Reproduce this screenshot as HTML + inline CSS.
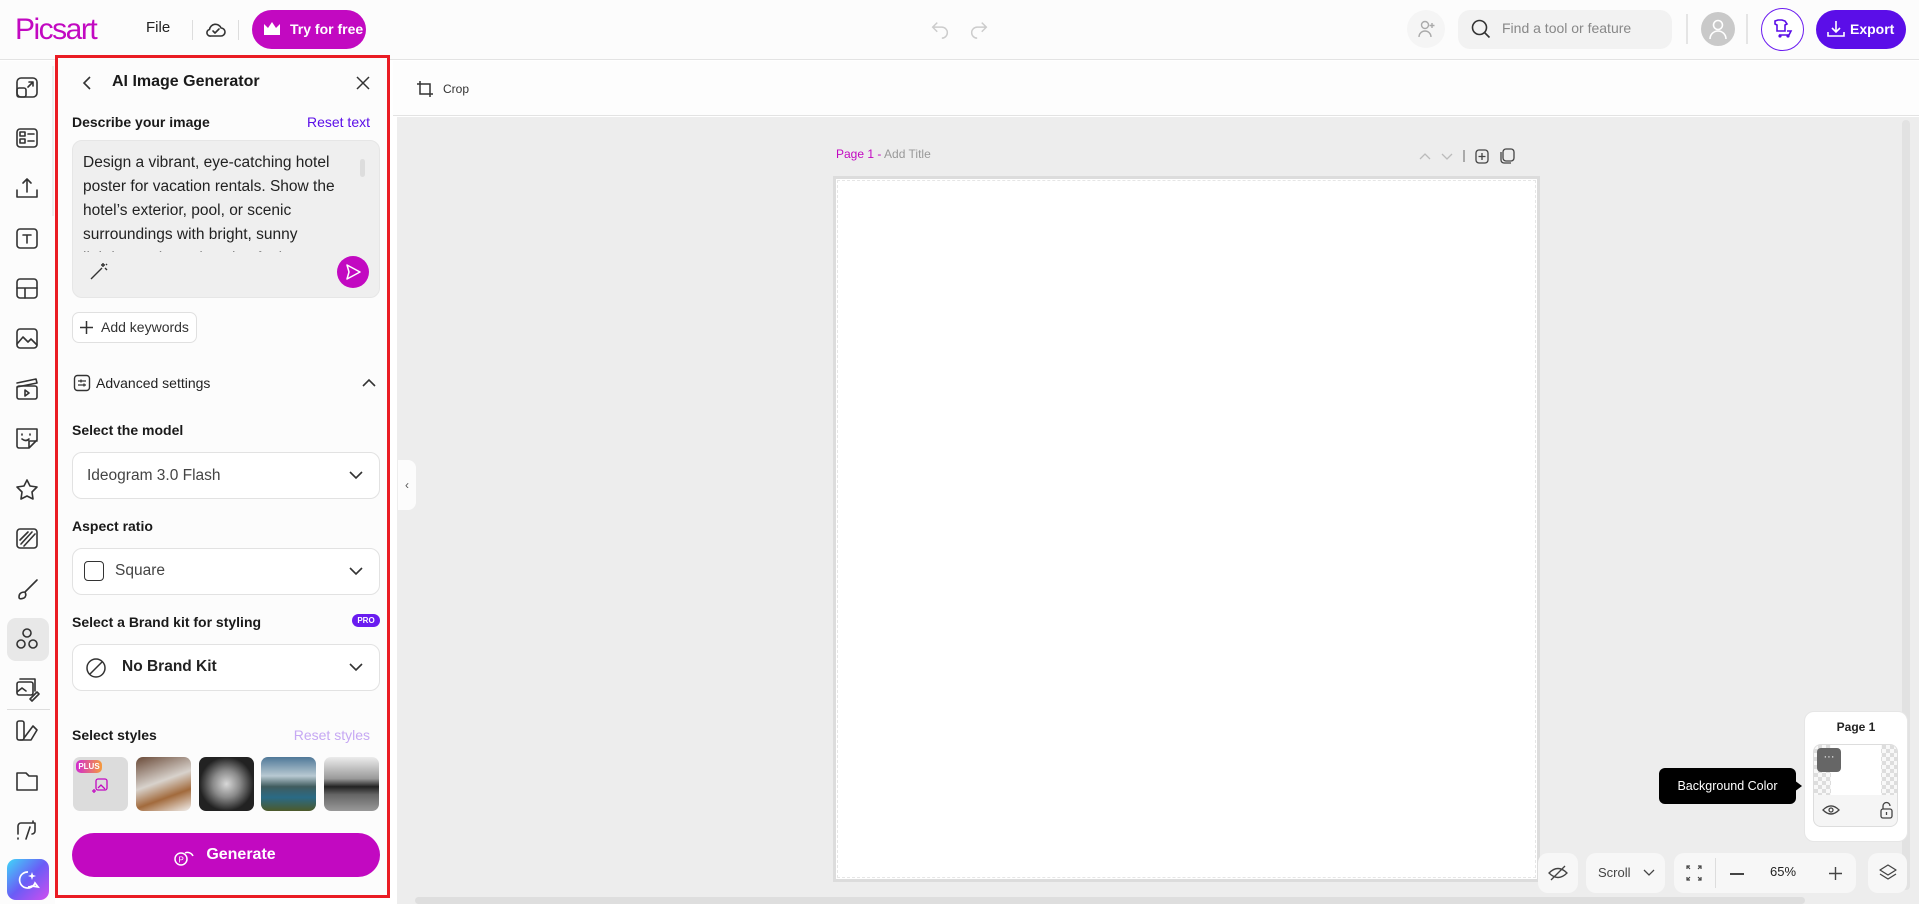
<!DOCTYPE html>
<html><head><meta charset="utf-8">
<style>
*{box-sizing:border-box;margin:0;padding:0}
body{width:1919px;height:904px;overflow:hidden;background:#fff;font-family:"Liberation Sans",sans-serif;color:#1a1a1a;position:relative}
.abs{position:absolute}
svg{display:block}
.ic{fill:none;stroke:#333;stroke-width:1.6;stroke-linecap:round;stroke-linejoin:round}
.dd{position:absolute;left:72px;width:308px;height:47px;border:1px solid #e2e2e2;border-radius:10px;background:#fff}
.lbl{position:absolute;left:72px;font-size:14px;font-weight:bold;color:#1a1a1a}
.ctl{position:absolute;background:#f7f7f7;border-radius:10px;top:853px;height:40px}
</style></head><body>

<!-- top bar -->
<div class="abs" style="left:0;top:0;width:1919px;height:60px;background:#fcfcfc;border-bottom:1px solid #e3e3e3"></div>
<div class="abs" style="left:15px;top:13px;font-size:30px;color:#c209c1;letter-spacing:-1.5px">Picsart</div>
<div class="abs" style="left:146px;top:19px;font-size:15px;color:#222">File</div>
<div class="abs" style="left:192px;top:20px;width:1px;height:20px;background:#ddd"></div>
<svg class="abs" style="left:204px;top:18px" width="24" height="24" viewBox="0 0 24 24"><path class="ic" d="M7 18h10a4 4 0 0 0 0-8 6 6 0 0 0-11.5 1.5A3.3 3.3 0 0 0 7 18z"/><path class="ic" d="M9 13l2 2 4-4"/></svg>
<div class="abs" style="left:238px;top:20px;width:1px;height:20px;background:#ddd"></div>
<div class="abs" style="left:252px;top:10px;width:114px;height:39px;border-radius:20px;background:#c209c1;color:#fff;font-size:14px;font-weight:bold;line-height:39px;padding-left:38px">Try for free</div>
<svg class="abs" style="left:263px;top:21px" width="18" height="16" viewBox="0 0 18 16"><path d="M1 3l4 4 4-6 4 6 4-4v11H1z" fill="#fff"/></svg>
<svg class="abs" style="left:929px;top:18px" width="22" height="22" viewBox="0 0 24 24"><path d="M9 5L4 10l5 5M4 10h10a6 6 0 0 1 0 12" fill="none" stroke="#ccc" stroke-width="1.6"/></svg>
<svg class="abs" style="left:968px;top:18px" width="22" height="22" viewBox="0 0 24 24"><path d="M15 5l5 5-5 5M20 10H10a6 6 0 0 0 0 12" fill="none" stroke="#ccc" stroke-width="1.6"/></svg>
<div class="abs" style="left:1407px;top:10px;width:38px;height:38px;border-radius:50%;background:#f5f5f5"></div>
<svg class="abs" style="left:1416px;top:18px" width="22" height="22" viewBox="0 0 22 22"><circle cx="9" cy="7" r="3.5" fill="none" stroke="#aaa" stroke-width="1.4"/><path d="M3 19a6 6 0 0 1 12 0M16 5v5M13.5 7.5h5" fill="none" stroke="#aaa" stroke-width="1.4"/></svg>
<div class="abs" style="left:1458px;top:10px;width:214px;height:39px;border-radius:12px;background:#f2f2f2"></div>
<svg class="abs" style="left:1470px;top:18px" width="22" height="22" viewBox="0 0 22 22"><circle cx="9.5" cy="9.5" r="7" fill="none" stroke="#333" stroke-width="1.6"/><path d="M14.5 14.5l5 5" stroke="#333" stroke-width="1.6"/></svg>
<div class="abs" style="left:1502px;top:20px;font-size:14px;color:#888">Find a tool or feature</div>
<div class="abs" style="left:1686px;top:14px;width:2px;height:30px;background:#e5e5e5"></div>
<div class="abs" style="left:1701px;top:12px;width:34px;height:34px;border-radius:50%;background:#c9c9c9"></div>
<svg class="abs" style="left:1708px;top:18px" width="20" height="22" viewBox="0 0 20 22"><circle cx="10" cy="7" r="4.5" fill="none" stroke="#fff" stroke-width="1.6"/><path d="M2 21a8 8 0 0 1 16 0" fill="none" stroke="#fff" stroke-width="1.6"/></svg>
<div class="abs" style="left:1746px;top:14px;width:2px;height:30px;background:#e5e5e5"></div>
<div class="abs" style="left:1761px;top:8px;width:43px;height:43px;border-radius:50%;border:1.5px solid #6b1cf0;background:#fff"></div>
<svg class="abs" style="left:1771px;top:18px" width="24" height="22" viewBox="0 0 24 22"><path d="M4 3l3-1h4l3 1 2 3-2 1v6H6V7L4 6z M8 17h10l2-4h-4" fill="none" stroke="#5b0ee8" stroke-width="1.6"/><circle cx="9" cy="18" r="1.6" fill="#5b0ee8"/><circle cx="17" cy="18" r="1.6" fill="#5b0ee8"/></svg>
<div class="abs" style="left:1816px;top:10px;width:90px;height:39px;border-radius:20px;background:#5b0ee8;color:#fff;font-size:14px;font-weight:bold;line-height:39px;padding-left:34px">Export</div>
<svg class="abs" style="left:1826px;top:19px" width="20" height="20" viewBox="0 0 20 20"><path d="M10 2v11M6 9l4 4 4-4M2 13v4h16v-4" fill="none" stroke="#fff" stroke-width="1.6"/></svg>

<!-- left rail -->
<div class="abs" style="left:0;top:61px;width:55px;height:843px;background:#fcfcfc"></div>
<div class="abs" style="left:52px;top:66px;width:2px;height:150px;background:#eee"></div>
<div class="abs" style="left:7px;top:618px;width:42px;height:43px;border-radius:9px;background:#e8e8e8"></div>
<div class="abs" style="left:7px;top:709px;width:43px;height:1px;background:#ddd"></div>
<svg class="abs" style="left:0;top:0" width="55" height="904" viewBox="0 0 55 904">
<g class="ic">
<g transform="translate(17,78)"><rect x="0" y="0" width="20" height="19" rx="4"/><rect x="0" y="10" width="9" height="9" rx="2"/><path d="M12 4h4v4M16 4l-5 5"/></g>
<g transform="translate(17,128)"><rect x="0" y="1" width="20" height="18" rx="3"/><rect x="3" y="4" width="5" height="4"/><rect x="3" y="11" width="5" height="4"/><path d="M11 6h6M11 13h6"/></g>
<g transform="translate(17,178)"><path d="M0 12v7h20v-7M10 1v13M6 5l4-4 4 4"/></g>
<g transform="translate(17,229)"><rect x="0" y="0" width="20" height="19" rx="3"/><path d="M6 6h8M10 6v8"/></g>
<g transform="translate(17,279)"><rect x="0" y="0" width="20" height="19" rx="3"/><path d="M0 9h20M8 9v10"/></g>
<g transform="translate(17,329)"><rect x="0" y="0" width="20" height="19" rx="3"/><path d="M0 15l6-7 5 5 3-3 6 6"/></g>
<g transform="translate(17,379)"><rect x="0" y="7" width="20" height="13" rx="2"/><path d="M0 4l19-4 1 4-20 4M8 11l4 3-4 3z"/></g>
<g transform="translate(17,429)"><path d="M0 0h20v11l-8 8H2a2 2 0 0 1-2-2z M12 19v-7h8M5 5v1M13 5v1M5 10q4 3 7 0"/></g>
<g transform="translate(17,479)"><path d="M10 1l3 6 7 1-5 5 1 7-6-3-6 3 1-7-5-5 7-1z"/></g>
<g transform="translate(17,529)"><rect x="0" y="0" width="20" height="19" rx="3"/><path d="M4 15l11-12M7 17l11-12M3 11l8-8"/></g>
<g transform="translate(17,579)"><path d="M20 1L8 13M8 13q-6 0-6 5q0 3 5 1q3-2 1-6"/></g>
<g transform="translate(17,629)"><circle cx="10" cy="4" r="4"/><circle cx="4" cy="15" r="4"/><circle cx="16" cy="15" r="4"/></g>
<g transform="translate(17,679)"><rect x="0" y="3" width="16" height="13" rx="2"/><path d="M3 0h15v12M0 13l5-4 4 3M13 20l7-7 2 2-7 7z"/></g>
<g transform="translate(17,721)"><rect x="0" y="0" width="7" height="19" rx="2"/><path d="M7 17l9-12 4 4-6 10H3"/></g>
<g transform="translate(17,771)"><path d="M0 2h9l3 3h8v14H0z"/></g>
<g transform="translate(17,821)"><path d="M1 13V5a3 3 0 0 1 3-3h14v8a3 3 0 0 1-3 3M9 18l4-12M1 17v1M16 2V0"/></g>
</g></svg>
<div class="abs" style="left:7px;top:859px;width:42px;height:41px;border-radius:9px;background:linear-gradient(135deg,#3fd8f8,#6a5cf6 50%,#d04ef0)"></div>
<svg class="abs" style="left:15px;top:867px" width="26" height="26" viewBox="0 0 26 26"><path d="M13 5a8 8 0 1 0 7 11l3 4-6-1a8 8 0 0 1-4 1" fill="none" stroke="#fff" stroke-width="1.7"/><path d="M17 5l1 3 3 1-3 1-1 3-1-3-3-1 3-1z" fill="#fff"/></svg>

<!-- panel -->
<div class="abs" style="left:55px;top:55px;width:335px;height:843px;background:#fcfcfc;border:3px solid #ea1c24"></div>
<svg class="abs" style="left:80px;top:75px" width="16" height="16" viewBox="0 0 16 16"><path d="M10 2L4 8l6 6" fill="none" stroke="#333" stroke-width="1.6"/></svg>
<div class="abs" style="left:112px;top:73px;font-size:16px;font-weight:bold">AI Image Generator</div>
<svg class="abs" style="left:355px;top:75px" width="16" height="16" viewBox="0 0 16 16"><path d="M2 2l12 12M14 2L2 14" stroke="#333" stroke-width="1.5"/></svg>
<div class="lbl" style="top:114px">Describe your image</div>
<div class="abs" style="left:305px;top:114px;font-size:14px;color:#5b0ee8;width:65px;text-align:right">Reset text</div>
<div class="abs" style="left:72px;top:140px;width:308px;height:158px;border-radius:10px;background:#efefef;border:1px solid #e6e6e6;overflow:hidden">
<div style="position:absolute;left:10px;top:10px;width:262px;font-size:15.5px;line-height:24px;color:#222;height:101px;overflow:hidden">Design a vibrant, eye-catching hotel poster for vacation rentals. Show the hotel’s exterior, pool, or scenic surroundings with bright, sunny lighting and a welcoming feel</div>
<div style="position:absolute;right:14px;top:18px;width:5px;height:18px;border-radius:3px;background:#ddd"></div>
</div>
<svg class="abs" style="left:89px;top:261px" width="20" height="20" viewBox="0 0 20 20"><path d="M2 18l11-11M14 2v4M12 4h4M16 7l2 2M17 4l1-1" stroke="#333" stroke-width="1.4" fill="none"/></svg>
<div class="abs" style="left:337px;top:256px;width:32px;height:32px;border-radius:50%;background:#c209c1"></div>
<svg class="abs" style="left:344px;top:263px" width="18" height="18" viewBox="0 0 18 18"><path d="M3 2l13 7-13 7 2-7z" fill="none" stroke="#fff" stroke-width="1.5" stroke-linejoin="round"/></svg>
<div class="abs" style="left:72px;top:312px;width:125px;height:31px;border:1px solid #e0e0e0;border-radius:7px;background:#fff;font-size:14px;line-height:29px;padding-left:28px;color:#333">Add keywords</div>
<svg class="abs" style="left:79px;top:320px" width="15" height="15" viewBox="0 0 15 15"><path d="M7.5 1v13M1 7.5h13" stroke="#333" stroke-width="1.5"/></svg>
<svg class="abs" style="left:73px;top:374px" width="18" height="18" viewBox="0 0 18 18"><rect x="1.5" y="1.5" width="15" height="15" rx="3" fill="none" stroke="#333" stroke-width="1.4"/><path d="M5 7h8M5 11h8M8 5.5v3M11 9.5v3" stroke="#333" stroke-width="1.3"/></svg>
<div class="abs" style="left:96px;top:375px;font-size:14px;color:#222">Advanced settings</div>
<svg class="abs" style="left:361px;top:377px" width="16" height="12" viewBox="0 0 16 12"><path d="M2 9l6-6 6 6" fill="none" stroke="#333" stroke-width="1.6"/></svg>

<div class="lbl" style="top:422px">Select the model</div>
<div class="dd" style="top:452px"><span style="position:absolute;left:14px;top:14px;font-size:15.5px;color:#444">Ideogram 3.0 Flash</span></div>
<div class="lbl" style="top:518px">Aspect ratio</div>
<div class="dd" style="top:548px"><span style="position:absolute;left:11px;top:12px;width:20px;height:20px;border:1.5px solid #333;border-radius:4px"></span><span style="position:absolute;left:42px;top:13px;font-size:15.5px;color:#444">Square</span></div>
<div class="lbl" style="top:614px">Select a Brand kit for styling</div>
<div class="abs" style="left:352px;top:614px;width:28px;height:13px;border-radius:7px;background:#6a1cf0;color:#fff;font-size:8px;font-weight:bold;text-align:center;line-height:13px">PRO</div>
<div class="dd" style="top:644px"><svg style="position:absolute;left:12px;top:12px" width="22" height="22" viewBox="0 0 22 22"><circle cx="11" cy="11" r="9" fill="none" stroke="#333" stroke-width="1.5"/><path d="M5 17L17 5" stroke="#333" stroke-width="1.5"/></svg><span style="position:absolute;left:49px;top:13px;font-size:15.5px;font-weight:bold;color:#222">No Brand Kit</span></div>
<svg class="abs" style="left:348px;top:469px" width="16" height="12" viewBox="0 0 16 12"><path d="M2 3l6 6 6-6" fill="none" stroke="#333" stroke-width="1.6"/></svg>
<svg class="abs" style="left:348px;top:565px" width="16" height="12" viewBox="0 0 16 12"><path d="M2 3l6 6 6-6" fill="none" stroke="#333" stroke-width="1.6"/></svg>
<svg class="abs" style="left:348px;top:661px" width="16" height="12" viewBox="0 0 16 12"><path d="M2 3l6 6 6-6" fill="none" stroke="#333" stroke-width="1.6"/></svg>

<div class="lbl" style="top:727px">Select styles</div>
<div class="abs" style="left:290px;top:727px;width:80px;text-align:right;font-size:14px;color:#c6a8f3">Reset styles</div>
<div class="abs" style="left:73px;top:757px;width:55px;height:54px;border-radius:7px;background:#dcdcdc"></div>
<div class="abs" style="left:76px;top:760px;width:26px;height:13px;border-radius:5px;background:linear-gradient(90deg,#d12bd0,#f59b3c);color:#fff;font-size:8px;font-weight:bold;text-align:center;line-height:13px">PLUS</div>
<svg class="abs" style="left:92px;top:777px" width="18" height="18" viewBox="0 0 18 18"><rect x="4" y="2" width="11" height="11" rx="2" fill="none" stroke="#c209c1" stroke-width="1.3"/><path d="M6 11l3-3 4 4M2 12v4M0 14h4" stroke="#c209c1" stroke-width="1.3" fill="none"/></svg>
<div class="abs" style="left:136px;top:757px;width:55px;height:54px;border-radius:7px;background:linear-gradient(160deg,#6a4a38,#d8d2cc 45%,#a26a3c 70%,#f2f0ee)"></div>
<div class="abs" style="left:199px;top:757px;width:55px;height:54px;border-radius:7px;background:radial-gradient(circle at 50% 50%,#d8d8d8 0,#8a8a8a 35%,#222 70%)"></div>
<div class="abs" style="left:261px;top:757px;width:55px;height:54px;border-radius:7px;background:linear-gradient(180deg,#4f7898,#b8c9d2 35%,#3f5c5e 55%,#2a6a86 75%,#4d5a2a)"></div>
<div class="abs" style="left:324px;top:757px;width:55px;height:54px;border-radius:7px;background:linear-gradient(180deg,#ececec,#9a9a9a 40%,#222 55%,#666 70%,#999)"></div>
<div class="abs" style="left:72px;top:833px;width:308px;height:44px;border-radius:22px;background:#c209c1;color:#fff;font-size:16px;font-weight:bold;text-align:center;line-height:44px;padding-left:30px">Generate</div>
<svg class="abs" style="left:172px;top:844px" width="24" height="24" viewBox="0 0 24 24"><circle cx="9" cy="15" r="6" fill="none" stroke="#fff" stroke-width="1.5"/><path d="M13 9a6 6 0 0 1 8 3" fill="none" stroke="#fff" stroke-width="1.5"/><text x="6.5" y="18.5" font-size="8" fill="#fff" font-family="Liberation Sans">P</text></svg>

<!-- canvas area -->
<div class="abs" style="left:393px;top:61px;width:1526px;height:55px;background:#fdfdfd;border-bottom:1px solid #e3e3e3"></div>
<svg class="abs" style="left:416px;top:80px" width="18" height="18" viewBox="0 0 18 18"><path d="M4 1v13h13M1 4h13v13" fill="none" stroke="#333" stroke-width="1.5"/></svg>
<div class="abs" style="left:443px;top:82px;font-size:12px;color:#333">Crop</div>
<div class="abs" style="left:397px;top:117px;width:1522px;height:787px;background:#ededed"></div>
<div class="abs" style="left:398px;top:460px;width:18px;height:50px;background:#fcfcfc;border-radius:0 8px 8px 0;font-size:12px;color:#555;text-align:center;line-height:50px">‹</div>
<div class="abs" style="left:836px;top:147px;font-size:12px;color:#c209c1">Page 1 - <span style="color:#999">Add Title</span></div>
<svg class="abs" style="left:1418px;top:148px" width="120" height="16" viewBox="0 0 120 16"><path d="M2 11l5-5 5 5M24 6l5 5 5-5" fill="none" stroke="#bbb" stroke-width="1.3"/><path d="M46 2v12" stroke="#666" stroke-width="1"/><rect x="58" y="2" width="12" height="13" rx="3" fill="none" stroke="#444" stroke-width="1.3"/><path d="M64 5v7M60.5 8.5h7" stroke="#444" stroke-width="1.3"/><rect x="85" y="1" width="11" height="12" rx="3" fill="none" stroke="#444" stroke-width="1.3"/><path d="M83 4v8a3 3 0 0 0 3 3h7" fill="none" stroke="#444" stroke-width="1.3"/></svg>
<div class="abs" style="left:833px;top:176px;width:707px;height:706px;background:#fff;border:3px solid #dcdcdc;outline:1px dashed #e6e6e6;outline-offset:-5px"></div>
<div class="abs" style="left:1902px;top:120px;width:8px;height:770px;border-radius:4px;background:#e2e2e2"></div>
<div class="abs" style="left:415px;top:897px;width:1390px;height:7px;border-radius:4px;background:#dedede"></div>

<!-- page card -->
<div class="abs" style="left:1804px;top:711px;width:104px;height:131px;background:#fff;border-radius:10px;border:1px solid #e6e6e6"></div>
<div class="abs" style="left:1804px;top:720px;width:104px;text-align:center;font-size:12px;font-weight:bold;color:#222">Page 1</div>
<div class="abs" style="left:1813px;top:744px;width:85px;height:83px;border-radius:8px;border:1px solid #ddd;background:#f5f5f5;overflow:hidden">
<div style="position:absolute;left:0;top:0;width:85px;height:50px;background:repeating-conic-gradient(#ddd 0 25%,#f8f8f8 0 50%) 0 0/8px 8px"></div>
<div style="position:absolute;left:17px;top:0;width:50px;height:50px;background:#fff"></div>
<div style="position:absolute;left:3px;top:3px;width:24px;height:24px;border-radius:4px;background:#666;color:#fff;font-size:11px;text-align:center;line-height:18px">···</div>
</div>
<svg class="abs" style="left:1820px;top:800px" width="80" height="20" viewBox="0 0 80 20"><path d="M3 10q8-8 16 0q-8 8-16 0z" fill="none" stroke="#444" stroke-width="1.3"/><circle cx="11" cy="10" r="2" fill="none" stroke="#444" stroke-width="1.3"/><rect x="61" y="9" width="11" height="9" rx="2" fill="none" stroke="#444" stroke-width="1.3"/><path d="M63 9V6a3.5 3.5 0 0 1 7 0M66.5 12v3" fill="none" stroke="#444" stroke-width="1.3"/></svg>
<div class="abs" style="left:1659px;top:768px;width:137px;height:36px;border-radius:6px;background:#000;color:#fff;font-size:12.5px;line-height:36px;text-align:center">Background Color</div>
<div class="abs" style="left:1794px;top:780px;width:0;height:0;border-top:6px solid transparent;border-bottom:6px solid transparent;border-left:8px solid #000"></div>

<!-- bottom controls -->
<div class="ctl" style="left:1538px;width:40px"></div>
<svg class="abs" style="left:1547px;top:863px" width="22" height="20" viewBox="0 0 22 20"><path d="M2 10q9-9 18 0q-9 9-18 0z" fill="none" stroke="#444" stroke-width="1.3"/><path d="M4 17L18 3" stroke="#444" stroke-width="1.3"/></svg>
<div class="ctl" style="left:1586px;width:79px;font-size:13px;color:#444;line-height:40px;padding-left:12px">Scroll</div>
<svg class="abs" style="left:1642px;top:868px" width="14" height="10" viewBox="0 0 14 10"><path d="M2 2l5 5 5-5" fill="none" stroke="#444" stroke-width="1.3"/></svg>
<div class="ctl" style="left:1674px;width:182px"></div>
<svg class="abs" style="left:1684px;top:863px" width="20" height="20" viewBox="0 0 20 20"><path d="M3 6V3h3M3 3l3 3M17 6V3h-3M17 3l-3 3M3 14v3h3M3 17l3-3M17 14v3h-3M17 17l-3-3" fill="none" stroke="#444" stroke-width="1.2"/></svg>
<div class="abs" style="left:1715px;top:858px;width:1px;height:30px;background:#ddd"></div>
<div class="abs" style="left:1730px;top:873px;width:14px;height:1.5px;background:#444"></div>
<div class="abs" style="left:1770px;top:864px;font-size:13px;color:#222">65%</div>
<svg class="abs" style="left:1828px;top:866px" width="15" height="15" viewBox="0 0 15 15"><path d="M7.5 1v13M1 7.5h13" stroke="#444" stroke-width="1.4"/></svg>
<div class="ctl" style="left:1868px;width:39px"></div>
<svg class="abs" style="left:1877px;top:862px" width="22" height="22" viewBox="0 0 22 22"><path d="M11 3l8 5-8 5-8-5z M3 12l8 5 8-5" fill="none" stroke="#444" stroke-width="1.3" stroke-linejoin="round"/></svg>
</body></html>
